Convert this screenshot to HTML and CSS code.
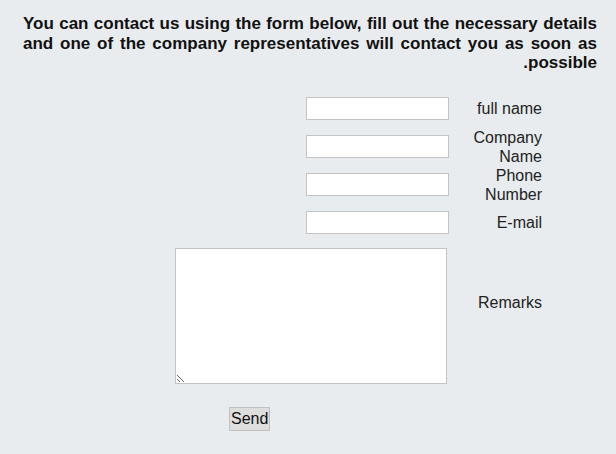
FILE: index.html
```html
<!DOCTYPE html>
<html lang="en" dir="rtl">
<head>
  <meta charset="UTF-8">
  <title>Contact us</title>
  <link rel="stylesheet" href="styles.css">
</head>
<body>
  <p class="intro">You can contact us using the form below, fill out the necessary details and one of the company representatives will contact you as soon as possible.</p>
  <form class="contact">
    <label class="lbl" for="fullname">full name</label>
    <input class="field" type="text" id="fullname">

    <label class="lbl" for="company">Company Name</label>
    <input class="field" type="text" id="company">

    <label class="lbl" for="phone">Phone Number</label>
    <input class="field" type="text" id="phone">

    <label class="lbl" for="email">E-mail</label>
    <input class="field" type="text" id="email">

    <label class="lbl lbl-remarks" for="remarks">Remarks</label>
    <textarea class="remarks" id="remarks"></textarea>

    <button class="send" type="button">Send</button>
  </form>
</body>
</html>
```

FILE: styles.css
```css
body {
  background-color: #e8ecee;
  margin: 0;
  padding: 0;
  font-family: "Liberation Sans", Arial, sans-serif;
  color: #222;
}
.intro {
  margin: 14px 19px 0 23px;
  font-size: 17px;
  font-weight: bold;
  line-height: 19.5px;
  text-align: justify;
  color: #111;
}
.contact {
  display: grid;
  grid-template-columns: 72px 274px;
  grid-template-rows: repeat(4, 38px) auto auto;
  column-gap: 21px;
  align-items: center;
  margin: 17px 74px 0 0;
  font-size: 16px;
}
.lbl {
  padding-top: 2px;
  line-height: 18.5px;
}
.field {
  justify-self: start;
  box-sizing: border-box;
  width: 143px;
  height: 23px;
  margin: 0;
  padding: 1px 2px;
  border: 1px solid #c4c4c4;
  background: #fff;
  font-size: 14px;
}
.lbl-remarks {
  align-self: start;
  padding-top: 52px;
}
.remarks {
  grid-column: 2;
  justify-self: start;
  align-self: start;
  box-sizing: border-box;
  width: 272px;
  height: 136px;
  margin: 6px 2px 0 0;
  padding: 2px;
  border: 1px solid #c4c4c4;
  background: #fff;
  resize: both;
}
.send {
  grid-column: 2;
  justify-self: end;
  align-self: start;
  box-sizing: border-box;
  height: 24px;
  margin: 23px 0 0 54px;
  padding: 1px;
  border: 1px solid #c0c0c0;
  background: #dedede;
  font-family: "Liberation Sans", Arial, sans-serif;
  font-size: 16px;
  color: #111;
}
```
